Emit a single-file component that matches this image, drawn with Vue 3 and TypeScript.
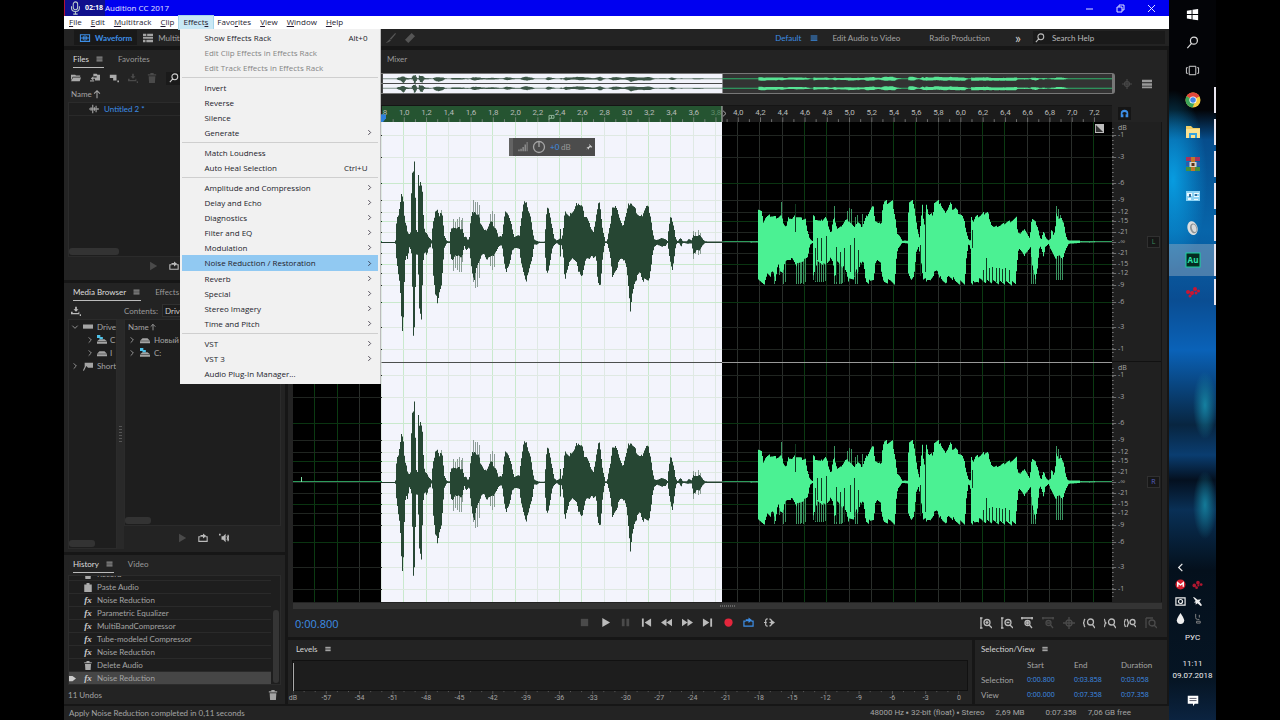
<script setup lang="ts">
import { h, ref } from 'vue'

type Sample = [number, number, number]
type Edge = [number, number]

/* ---------- icons ---------- */
interface Glyph { fill?: string; line?: string; accent?: string }
const glyphs: Record<string, Glyph> = {
  menu: { line: 'M2 3.5H10M2 6H10M2 8.5H10' },
  folder: { fill: 'M0 2H5L6 3H11V4.5H2L0 9ZM2.5 5.5H12L10.5 10H0Z' },
  importFile: { fill: 'M4 1H8L9 2H12V9H6V7H4V9L1 6.5L4 4V5.5H8V4H4Z', line: 'M0 9.5H5' },
  newFile: { fill: 'M1 2H9V9H5V6H1ZM10 9H12V11H10Z' },
  insert: { fill: 'M5 1H7V4H9L6 7L3 4H5ZM0 7H2V8.5H9V7H10V10H0ZM10.5 10H12V12H10.5Z' },
  trash: { fill: 'M4 0H8V1.5H11V3H1V1.5H4ZM2 4H10L9.5 12H2.5Z' },
  search: { line: 'M10.5 4.5A3.5 3.5 0 1 1 3.5 4.5A3.5 3.5 0 0 1 10.5 4.5ZM4.5 7L1 11' },
  play: { fill: 'M2.5 1L11 6L2.5 11Z' },
  stop: { fill: 'M2 2H10V10H2Z' },
  pause: { fill: 'M2 2H5V10H2ZM7 2H10V10H7Z' },
  first: { fill: 'M1 1.5H3V10.5H1ZM11 1.5V10.5L4 6Z' },
  last: { fill: 'M9 1.5H11V10.5H9ZM1 1.5V10.5L8 6Z' },
  rewind: { fill: 'M6 2V10L0 6ZM12 2V10L6 6Z' },
  forward: { fill: 'M0 2V10L6 6ZM6 2V10L12 6Z' },
  record: { fill: 'M10.5 6A4.5 4.5 0 1 1 1.5 6A4.5 4.5 0 0 1 10.5 6Z' },
  loop: { line: 'M3 4.5H1V10H11V4.5H9', fill: 'M6 0.5L10 3.5L6 6.5V4.5H3V2.5H6Z' },
  skip: { line: 'M4 2Q1 2 2 6Q1 10 4 10M6 2Q9 3 8 6Q9 9 6 10M0 6H3M6 6H10', fill: 'M8 3L12 6L8 9Z' },
  speaker: { fill: 'M3 4H5L8 1V11L5 8H3ZM0 1H2V3H0Z', line: 'M9.5 3.5Q11 6 9.5 8.5M10.5 2Q13 6 10.5 10' },
  wave: { line: 'M0 6H12M2.5 4V8M4.5 1V11M6.5 4V8M8.5 2V10M10.5 5V7' },
  waveBox: { line: 'M.5 2H11.5V10H.5ZM1 6H11M4 4V8M6 3V9M8 4V8' },
  multi: { fill: 'M0 1H4V3.5H0ZM5 1H12V3.5H5ZM0 4.5H12V7H0ZM0 8H3V11H0ZM4 8H12V11H4Z' },
  brush: { fill: 'M11 0L12 1L6 8L4.5 7ZM4 7.5L6 9Q3 12 0 11.5Q3 10 4 7.5Z' },
  heal: { fill: 'M8 0L12 4L4 12L0 8Z' },
  up: { line: 'M6 11V2M2.5 5.5L6 2L9.5 5.5' },
  right: { line: 'M4 2L8 6L4 10' },
  down: { line: 'M2 4L6 8L10 4' },
  drive: { fill: 'M3 4H9L12 7H0ZM0 7.5H12V10H0Z' },
  systemDrive: { fill: 'M3 5H9L12 7.5H0ZM0 8H12V10.5H0Z', accent: 'M0 0H4V2.5H7V5H3V3.5H0Z' },
  disk: { fill: 'M0 3H12V8H0Z' },
  shortcut: { fill: 'M2 2H12V8H6L4 6L1 12L0 11L2 7Z' },
  paste: { fill: 'M1 2H4V0H8V2H11V12H1Z' },
  pin: { fill: 'M6 1L11 6L9 7L8 6L6 8V10L4 8L1 11L4 7L2 6H5L7 4Z' },
  headphones: { fill: 'M1 11V6A5 5 0 0 1 11 6V11H7.5V7H9A3 3 0 0 0 3 7H4.5V11Z' },
  target: { line: 'M6 0V12M0 6H12M9 6A3 3 0 1 1 3 6A3 3 0 0 1 9 6Z' },
  list: { fill: 'M0 1H12V4H0ZM0 5H12V8H0ZM0 9H12V11H0Z' },
  zoomInV: { line: 'M1 1V11M0 1H2.5M0 11H2.5M10 5.5A3 3 0 1 1 4 5.5A3 3 0 0 1 10 5.5ZM9 8L12 11M5.5 5.5H8.5M7 4V7' },
  zoomOutV: { line: 'M1 1V11M0 1H2.5M0 11H2.5M10 5.5A3 3 0 1 1 4 5.5A3 3 0 0 1 10 5.5ZM9 8L12 11M5.5 5.5H8.5' },
  zoomInH: { line: 'M0 1H12M1 0V2.5M11 0V2.5M9 6A2.5 2.5 0 1 1 4 6A2.5 2.5 0 0 1 9 6ZM8.5 8L11 11M5 6H8M6.5 4.5V7.5' },
  zoomOutH: { line: 'M0 1H12M1 0V2.5M11 0V2.5M9 6A2.5 2.5 0 1 1 4 6A2.5 2.5 0 0 1 9 6ZM8.5 8L11 11M5 6H8' },
  zoomStart: { line: 'M2 2Q1 3 1 5L0 6L1 7Q1 9 2 10M10.5 5A3 3 0 1 1 4.5 5A3 3 0 0 1 10.5 5ZM9.5 7.5L12 11' },
  zoomEnd: { line: 'M0 2Q1 3 1 5L2 6L1 7Q1 9 0 10M10.5 5A3 3 0 1 1 4.5 5A3 3 0 0 1 10.5 5ZM9.5 7.5L12 11' },
  zoomSel: { line: 'M1.5 2L0 6L1.5 10M3 2L4.5 6L3 10M11 5A2.5 2.5 0 1 1 6 5A2.5 2.5 0 0 1 11 5ZM10 7.5L12 10' },
  zoomFull: { line: 'M1 1V11M1 1H8M10 6A3 3 0 1 1 4 6A3 3 0 0 1 10 6ZM9 8L12 11' },
}
const Icon = (props: { name: string }) => {
  const g = glyphs[props.name]
  return h('svg', { class: 'icon', viewBox: '0 0 12 12', 'aria-hidden': 'true' }, [
    g.fill ? h('path', { d: g.fill, fill: 'currentColor' }) : null,
    g.accent ? h('path', { d: g.accent, fill: '#4fc3ea' }) : null,
    g.line ? h('path', { d: g.line, fill: 'none', stroke: 'currentColor', 'stroke-width': '1.3' }) : null,
  ])
}
Icon.props = ['name']

/* ---------- menus ---------- */
const menusLeft = [['', 'F', 'ile'], ['', 'E', 'dit'], ['', 'M', 'ultitrack'], ['', 'C', 'lip']]
const menusRight = [['Favo', 'r', 'ites'], ['', 'V', 'iew'], ['', 'W', 'indow'], ['', 'H', 'elp']]
interface Entry { text: string; key?: string; off?: boolean; sub?: boolean; hot?: boolean }
const sub = (text: string): Entry => ({ text, sub: true })
const groups: Entry[][] = [
  [
    { text: 'Show Effects Rack', key: 'Alt+0' },
    { text: 'Edit Clip Effects in Effects Rack', off: true },
    { text: 'Edit Track Effects in Effects Rack', off: true },
  ],
  [{ text: 'Invert' }, { text: 'Reverse' }, { text: 'Silence' }, sub('Generate')],
  [{ text: 'Match Loudness' }, { text: 'Auto Heal Selection', key: 'Ctrl+U' }],
  [
    sub('Amplitude and Compression'), sub('Delay and Echo'), sub('Diagnostics'), sub('Filter and EQ'),
    sub('Modulation'), { text: 'Noise Reduction / Restoration', sub: true, hot: true }, sub('Reverb'),
    sub('Special'), sub('Stereo Imagery'), sub('Time and Pitch'),
  ],
  [sub('VST'), sub('VST 3'), { text: 'Audio Plug-In Manager...' }],
]

const history = [
  { icon: 'trash', text: 'Record' },
  { icon: 'paste', text: 'Paste Audio' },
  { icon: 'fx', text: 'Noise Reduction' },
  { icon: 'fx', text: 'Parametric Equalizer' },
  { icon: 'fx', text: 'MultiBandCompressor' },
  { icon: 'fx', text: 'Tube-modeled Compressor' },
  { icon: 'fx', text: 'Noise Reduction' },
  { icon: 'trash', text: 'Delete Audio' },
  { icon: 'fx', text: 'Noise Reduction' },
]
const current = ref(8)

const transport = [
  ['stop', 'Stop', 'dim'], ['play', 'Play', ''], ['pause', 'Pause', 'dim'], ['first', 'Go to start', ''],
  ['rewind', 'Rewind', ''], ['forward', 'Fast forward', ''], ['last', 'Go to end', ''],
  ['record', 'Record', 'red'], ['loop', 'Loop playback', 'blue'], ['skip', 'Skip selection', ''],
]
const zooms = [
  ['zoomInV', 'Zoom in amplitude', ''], ['zoomOutV', 'Zoom out amplitude', ''], ['zoomInH', 'Zoom in time', ''],
  ['zoomOutH', 'Zoom out time', 'dim'], ['target', 'Zoom out full', 'dim'], ['zoomStart', 'Zoom to in point', ''],
  ['zoomEnd', 'Zoom to out point', ''], ['zoomSel', 'Zoom to selection', ''], ['zoomFull', 'Zoom all', 'dim'],
]

/* ---------- time and level scales ---------- */
const W = 819
const DURATION = 7.358
const SEL_END = 429
const SEL_START = 89
const times = Array.from({ length: 36 }, (_, i) => (i + 1) / 5)
const timeX = (t: number) => (t / DURATION) * W
const pct = (v: number, total: number) => (v / total) * 100 + '%'
const timeText = (t: number) => t.toFixed(1).replace('.', ',')
const greenLine = (i: number) => [0, 1, 4, 5, 8, 9, 11, 12, 15, 16, 22, 23, 26, 27, 30, 31, 35].includes(i)

const scale: [number, string][] = [
  [13, '-1'], [35, '-3'], [61, '-6'], [78, '-9'], [90, '-12'], [99, '-15'], [110, '-21'], [120, '-∞'],
  [131, '-21'], [142, '-15'], [151, '-12'], [163, '-9'], [180, '-6'], [205, '-3'], [227, '-1'],
]
const minorTicks = Array.from({ length: 58 }, (_, i) => i * 4 + 6)
const levels = Array.from({ length: 21 }, (_, i) => (i === 0 ? 'dB' : i === 20 ? '0' : String(-60 + i * 3)))

/* ---------- waveform envelopes: x in thirds of a unit, heights above and below the axis ---------- */
const speechA: Sample[] = [
  [46, 5, 5], [50, 75, 60], [55, 80, 100], [60, 110, 130], [66, 150, 262], [71, 120, 235], [74, 60, 70], [78, 55, 40],
  [82, 30, 50], [88, 25, 15], [92, 30, 25], [95, 205, 40], [100, 205, 280], [103, 230, 250], [106, 140, 130],
  [108, 40, 40], [112, 30, 40], [115, 200, 100], [118, 165, 200], [124, 180, 225], [128, 150, 90], [131, 50, 40],
  [135, 30, 30], [140, 25, 40], [146, 15, 15], [150, 10, 20], [154, 5, 5], [157, 40, 20], [160, 60, 100], [166, 95, 150],
  [172, 97, 190], [178, 75, 150], [184, 90, 125], [188, 80, 90], [192, 20, 20], [200, 3, 3], [208, 2, 2], [212, 40, 50],
  [218, 40, 55], [224, 45, 40], [230, 40, 45], [236, 45, 40], [242, 40, 45], [248, 40, 40], [252, 15, 10], [258, 15, 25],
  [264, 5, 18], [268, 15, 20], [272, 70, 60], [278, 90, 100], [284, 95, 110], [290, 80, 75], [296, 80, 60],
  [300, 60, 50], [306, 50, 40], [312, 35, 35], [318, 35, 50], [324, 45, 50], [330, 60, 45], [336, 60, 40], [342, 45, 40],
  [348, 40, 30], [355, 15, 15], [360, 20, 10], [366, 15, 12], [372, 70, 60], [378, 95, 88], [384, 85, 80], [390, 65, 60],
  [396, 45, 25], [402, 15, 20], [410, 18, 18], [418, 20, 20], [422, 60, 60], [430, 110, 90], [438, 130, 115],
  [444, 95, 100], [450, 80, 70], [456, 45, 50], [462, 8, 8], [470, 3, 8], [480, 1, 1], [494, 1, 1], [498, 80, 90],
  [503, 110, 98], [510, 75, 60], [516, 50, 20], [522, 12, 10], [530, 4, 3], [538, 10, 10], [541, 40, 45], [544, 10, 10],
  [549, 25, 30], [554, 100, 110], [560, 85, 95], [568, 75, 60], [574, 90, 50], [582, 95, 55], [590, 115, 60],
  [595, 120, 85], [600, 110, 100], [606, 108, 105], [612, 80, 70], [620, 75, 50], [628, 55, 50], [634, 40, 40],
  [640, 30, 50], [648, 70, 40], [654, 120, 130], [658, 120, 135], [662, 90, 130], [666, 45, 60], [672, 20, 15],
  [676, 2, 2], [681, 2, 2], [684, 20, 15], [690, 50, 35], [697, 105, 110], [704, 100, 90], [710, 110, 80], [716, 80, 60],
  [722, 60, 50], [728, 45, 50], [734, 70, 60], [740, 90, 80], [746, 115, 140], [752, 122, 210], [757, 110, 160],
  [764, 100, 120], [772, 85, 105], [780, 75, 90], [786, 80, 110], [792, 95, 115], [800, 108, 115], [806, 100, 112],
  [812, 75, 90], [817, 35, 40], [822, 8, 15], [830, 6, 8], [846, 12, 14], [856, 8, 12], [862, 3, 3], [866, 45, 25],
  [872, 82, 70], [877, 60, 85], [882, 40, 50], [887, 10, 10], [893, 2, 2], [899, 10, 5], [903, 12, 15], [908, 2, 2],
  [920, 2, 5], [926, 10, 5], [934, 5, 5], [940, 20, 35], [950, 18, 25], [958, 20, 25], [964, 15, 15], [970, 6, 8],
  [975, 2, 2], [1035, 1, 1],
]
const upB: Edge[] = [
  [90, 1], [113, 1], [114, 100], [124, 90], [128, 60], [136, 75], [150, 80], [165, 75], [175, 75], [182, 80], [190, 55],
  [197, 45], [205, 75], [215, 70], [225, 80], [235, 75], [245, 70], [255, 70], [260, 35], [268, 10], [276, 3], [278, 80],
  [285, 70], [300, 62], [315, 75], [320, 65], [325, 45], [332, 25], [338, 65], [343, 70], [350, 40], [360, 45],
  [375, 65], [385, 65], [400, 45], [412, 60], [425, 45], [435, 70], [445, 90], [455, 105], [460, 100], [464, 65],
  [475, 55], [483, 60], [487, 110], [492, 120], [516, 120], [520, 100], [525, 70], [530, 25], [540, 15], [545, 4],
  [561, 4], [565, 120], [580, 120], [585, 80], [592, 30], [597, 15], [600, 50], [606, 112], [611, 40], [618, 118],
  [625, 80], [638, 85], [642, 120], [660, 120], [664, 105], [672, 90], [682, 100], [690, 115], [697, 100], [705, 102],
  [713, 90], [725, 80], [732, 60], [738, 30], [745, 5], [750, 5], [753, 80], [758, 60], [765, 75], [780, 80], [795, 90],
  [803, 90], [808, 60], [820, 45], [840, 50], [860, 60], [875, 65], [888, 72], [892, 30], [900, 25], [912, 40],
  [920, 25], [928, 10], [934, 72], [945, 60], [952, 45], [957, 20], [962, 5], [970, 35], [976, 12], [984, 5], [990, 10],
  [994, 45], [998, 20], [1004, 30], [1008, 90], [1014, 70], [1022, 70], [1030, 60], [1036, 20], [1042, 5], [1078, 4],
  [1080, 1], [1124, 1],
]
const downB: Edge[] = [
  [90, 1], [113, 1], [114, 120], [130, 122], [136, 120], [140, 95], [150, 100], [158, 90], [165, 115], [172, 65],
  [180, 90], [186, 90], [195, 60], [200, 55], [215, 50], [222, 60], [228, 70], [256, 50], [262, 45], [268, 10],
  [276, 3], [279, 100], [290, 60], [318, 70], [322, 60], [330, 50], [338, 60], [343, 110], [350, 60], [368, 75],
  [378, 90], [385, 118], [400, 110], [406, 80], [412, 100], [420, 60], [430, 65], [436, 118], [450, 120], [460, 110],
  [464, 70], [470, 55], [480, 60], [486, 110], [490, 122], [510, 118], [524, 122], [527, 60], [532, 20], [540, 10],
  [545, 3], [561, 4], [564, 100], [572, 115], [582, 95], [588, 30], [594, 15], [600, 40], [608, 115], [616, 105],
  [620, 122], [630, 115], [640, 95], [650, 85], [656, 100], [664, 118], [676, 120], [684, 105], [695, 108], [705, 120],
  [720, 122], [733, 125], [737, 60], [742, 20], [745, 3], [750, 20], [753, 120], [762, 125], [770, 118], [780, 115],
  [800, 118], [885, 125], [890, 60], [895, 20], [905, 30], [912, 40], [920, 30], [930, 15], [935, 70], [945, 110],
  [952, 70], [958, 10], [965, 25], [970, 45], [975, 15], [985, 5], [992, 25], [1000, 40], [1006, 50], [1016, 40],
  [1026, 50], [1030, 40], [1038, 18], [1045, 5], [1078, 3], [1080, 1], [1124, 1],
]

const at = (edge: Edge[], x: number): number => {
  const i = edge.findIndex((p) => p[0] >= x)
  if (i <= 0) return edge[i === 0 ? 0 : edge.length - 1][1]
  const [x0, y0] = edge[i - 1]
  const [x1, y1] = edge[i]
  return y0 + ((y1 - y0) * (x - x0)) / (x1 - x0)
}
const ripple = (i: number) => 0.94 + (((i * 7919) % 13) / 13) * 0.12

function envelope(up: Edge[], down: Edge[], offset: number, axis: number, gain: number): string {
  const from = up[0][0]
  const to = up[up.length - 1][0]
  let top = ''
  let bottom = ''
  for (let x = from, i = 0; x <= to; x += 3, i++) {
    const px = Math.round(offset + x / 3)
    const a = (axis - (at(up, x) / 3) * gain * ripple(i)).toFixed(1)
    const b = (axis + (at(down, x) / 3) * gain * ripple(i + 5)).toFixed(1)
    top += `L${px} ${a}H${px + 1}`
    bottom = `L${px + 1} ${b}H${px}` + bottom
  }
  return 'M' + top.slice(1) + bottom + 'Z'
}
const upA: Edge[] = speechA.map((s) => [s[0], s[1]])
const downA: Edge[] = speechA.map((s) => [s[0], s[2]])
const channels = [120, 360].map((axis) => ({
  axis,
  a: envelope(upA, downA, 87, axis, 1),
  b: envelope(upB, downB, 427, axis, 1),
}))
const mini = [5, 15].map((axis) => ({
  axis,
  a: envelope(upA, downA, 87, axis, 0.05),
  b: envelope(upB, downB, 427, axis, 0.05),
}))

/* thin transients and gaps: x, start, end relative to the axis */
const bars = (list: [number, number, number][], offset: number) =>
  list.map(([x, y0, y1]) => `M${Math.round(offset + x / 3) + 0.5} ${y0}V${y1}`).join('')
const thinA = bars([
  [170, -32, 40], [182, -32, 30], [218, -23, 29], [224, -20, 26], [230, -23, 28], [236, -25, 30], [242, -22, 30],
  [247, -24, 20], [279, -42, 40], [284, -40, 46], [290, -40, 45], [297, -37, 36], [331, -28, 24], [336, -31, 28],
  [342, -28, 25], [940, -11, 17], [946, -10, 12], [953, -12, 13], [960, -9, 12],
], 87)
const thinB = bars([
  [182, -40, 0], [225, -38, 0], [163, 0, 42], [176, 0, 33], [189, 0, 42], [194, 0, 40], [228, 0, 42], [234, 0, 42],
  [239, 0, 42], [244, 0, 41], [250, 0, 42], [255, 0, 40], [278, 0, 38], [286, 0, 40], [292, 0, 40], [298, 0, 40],
  [304, 0, 40], [310, 0, 40], [316, 0, 39], [343, -36, 42], [349, 0, 42], [356, 0, 42], [362, 0, 42], [367, 0, 41],
  [380, -31, 0], [386, -34, 0], [392, -33, 0], [404, -25, 42], [410, -27, 42], [426, -28, 0], [933, 0, 42],
  [939, 0, 42], [944, 0, 42], [1007, -36, 38], [1013, -33, 38], [1019, -27, 38], [1025, -22, 38],
], 427)
const gapsB = bars([
  [226, -38, -10], [284, 6, 39], [291, -4, 18], [303, -4, 19], [317, -6, 38], [349, 5, 40], [361, 10, 42], [373, 6, 40],
  [389, 3, 30], [403, -4, 34], [415, 8, 30], [600, 3, 34], [614, -30, 30], [789, 28, 40], [797, 16, 40], [807, 26, 40],
  [817, 25, 40], [828, 26, 40], [838, 26, 40], [847, 27, 40], [856, 26, 40], [868, 28, 40], [755, -12, 6],
], 427)

const clips = [
  { text: 'Chrome', cls: 'chrome' }, { text: 'Explorer', cls: 'explorer' }, { text: 'Archive', cls: 'rar' },
  { text: 'Control panel', cls: 'panelapp' }, { text: 'Audio device', cls: 'device' },
  { text: 'Audition', cls: 'au' }, { text: 'Molecule', cls: 'red' },
]
</script>

<template>
  <div class="screen">
    <main class="window">
      <header class="titlebar">
        <div class="recorder">
          <svg viewBox="0 0 12 16" class="mic" aria-hidden="true"><rect x="4" y="1" width="5" height="9" rx="2.5" /><path d="M2 6V8Q2 12 6.5 12Q11 12 11 8V6M6.5 12V15M4 15H9" /></svg>
          <span>02:18</span>
        </div>
        <span class="app-title">Audition CC 2017</span>
        <div class="window-buttons">
          <button aria-label="Minimize"><svg viewBox="0 0 9 9"><path d="M1 5H8" /></svg></button>
          <button aria-label="Restore"><svg viewBox="0 0 9 9"><path d="M1 3H6V8H1ZM3 3V1H8V6H6" /></svg></button>
          <button aria-label="Close"><svg viewBox="0 0 9 9"><path d="M1 1L8 8M8 1L1 8" /></svg></button>
        </div>
      </header>

      <nav class="menubar">
        <button v-for="m in menusLeft" :key="m[2]">{{ m[0] }}<u>{{ m[1] }}</u>{{ m[2] }}</button>
        <div class="menu-holder">
          <button class="open">Effect<u>s</u></button>
          <div class="menu">
            <ul v-for="(group, g) in groups" :key="g">
              <li v-for="item in group" :key="item.text">
                <button :class="{ hot: item.hot }" :disabled="item.off">
                  <span>{{ item.text }}</span>
                  <span v-if="item.key" class="key">{{ item.key }}</span>
                  <Icon v-if="item.sub" name="right" />
                </button>
              </li>
            </ul>
          </div>
        </div>
        <button v-for="m in menusRight" :key="m[2]">{{ m[0] }}<u>{{ m[1] }}</u>{{ m[2] }}</button>
      </nav>

      <div class="toolbar">
        <div class="modes">
          <button class="mode on"><Icon name="waveBox" />Waveform</button>
          <button class="mode"><Icon name="multi" />Multitrack</button>
        </div>
        <div class="brushes"><Icon name="brush" /><Icon name="heal" /></div>
        <div class="workspaces">
          <button class="blue default">Default <Icon name="menu" /></button>
          <button>Edit Audio to Video</button>
          <button>Radio Production</button>
          <button class="more" aria-label="More workspaces">»</button>
        </div>
        <label class="help"><Icon name="search" /><input type="search" placeholder="Search Help" aria-label="Search Help" /></label>
      </div>

      <div class="workspace">
        <aside class="side">
          <section class="panel files-panel">
            <div class="tabs"><button class="tab on">Files<Icon name="menu" /></button><button class="tab">Favorites</button></div>
            <div class="file-tools">
              <button aria-label="Open"><Icon name="folder" /></button>
              <button aria-label="Import"><Icon name="importFile" /></button>
              <button aria-label="New"><Icon name="newFile" /></button>
              <button aria-label="Insert" class="dim"><Icon name="insert" /></button>
              <button aria-label="Delete file" class="dim"><Icon name="trash" /></button>
              <label class="filter"><Icon name="search" /><input aria-label="Filter files" /></label>
            </div>
            <div class="list-head">Name<Icon name="up" /></div>
            <div class="well files">
              <div class="file-row"><Icon name="wave" /><a href="#">Untitled 2 *</a></div>
              <i class="thumb long"></i>
            </div>
            <div class="mini-transport files-transport">
              <button aria-label="Play file" class="dim"><Icon name="play" /></button>
              <button aria-label="Loop file"><Icon name="loop" /></button>
            </div>
          </section>

          <section class="panel media-panel">
            <div class="tabs"><button class="tab on">Media Browser<Icon name="menu" /></button><button class="tab">Effects Rack</button></div>
            <div class="contents">
              <button aria-label="Import media"><Icon name="insert" /></button>
              <label for="contents">Contents:</label>
              <select id="contents"><option>Drives</option></select>
            </div>
            <div class="split">
              <div class="tree">
                <div><Icon name="down" /><Icon name="disk" /><span>Drive</span></div>
                <div class="child"><Icon name="right" /><Icon name="systemDrive" /><span>C</span></div>
                <div class="child"><Icon name="right" /><Icon name="drive" /><span>I</span></div>
                <div><Icon name="right" /><Icon name="shortcut" /><span>Short</span></div>
                <i class="thumb"></i>
              </div>
              <div class="splitter"><i></i></div>
              <div class="right-list">
                <div class="tree flat">
                  <div class="head">Name<Icon name="up" /></div>
                  <div><Icon name="right" /><Icon name="drive" /><span>Новый</span></div>
                  <div><Icon name="right" /><Icon name="systemDrive" /><span>C:</span></div>
                  <i class="thumb"></i>
                </div>
                <div class="mini-transport">
                  <button aria-label="Play media" class="dim"><Icon name="play" /></button>
                  <button aria-label="Loop media"><Icon name="loop" /></button>
                  <button aria-label="Auto-play"><Icon name="speaker" /></button>
                </div>
              </div>
            </div>
          </section>

          <section class="panel">
            <div class="tabs"><button class="tab on">History<Icon name="menu" /></button><button class="tab">Video</button></div>
            <div class="well history">
              <ol>
                <li v-for="(row, i) in history" :key="i" :class="{ current: i === current }">
                  <button @click="current = i">
                    <span class="marker"><svg v-if="i === current" viewBox="0 0 8 8"><path d="M0 1H4L8 4L4 7H0Z" /></svg></span>
                    <em v-if="row.icon === 'fx'">fx</em>
                    <Icon v-else :name="row.icon" />
                    <span>{{ row.text }}</span>
                  </button>
                </li>
              </ol>
              <i class="vthumb"></i>
            </div>
            <div class="undos"><span>11 Undos</span><button aria-label="Clear history"><Icon name="trash" /></button></div>
          </section>
        </aside>

        <div class="main">
          <section class="editor">
            <div class="tabs mixer-tabs"><button class="tab">Mixer</button></div>

            <div class="overview">
              <svg class="mini" viewBox="0 0 819 20" preserveAspectRatio="none" role="img" aria-label="Overview">
                <rect width="819" height="20" fill="#333" />
                <rect :x="SEL_START" :width="SEL_END - SEL_START" height="20" fill="#f2f3fb" />
                <path d="M0 10H89" stroke="#777" /><path d="M89 10H429" stroke="#444" />
                <g v-for="m in mini" :key="m.axis">
                  <path :d="'M89 ' + m.axis + 'H429'" stroke="#2b4c38" stroke-width=".6" />
                  <path :d="'M429 ' + m.axis + 'H819'" stroke="#2fb56c" />
                  <path :d="m.a" fill="#3c5647" /><path :d="m.b" fill="#57e594" />
                </g>
              </svg>
              <div class="overview-tools">
                <Icon name="target" class="dim" />
                <Icon name="list" />
              </div>
            </div>

            <div class="stage">
              <div class="ruler">
                <span class="selected" :style="{ left: pct(SEL_START, W), right: pct(W - SEL_END, W) }"></span>
                <span v-for="t in times" :key="t" class="time" :class="{ faded: t === 3.8 }" :style="{ left: pct(timeX(t), W) }">{{ timeText(t) }}</span>
                <svg viewBox="0 0 819 17" preserveAspectRatio="none" aria-hidden="true">
                  <path v-for="t in times" :key="t" :d="`M${timeX(t)} 12V17M${timeX(t - 0.1)} 14V17`" stroke="#999" stroke-width=".7" />
                  <path d="M429 0V17" stroke="#c8c8c8" /><path d="M430 5L433 8L430 11" fill="none" stroke="#aaa" />
                  <path d="M87 9H93V13L90 17H87Z" fill="#2f80dc" />
                  <path d="M256 15V10H261V13H256M258.5 10V13" fill="none" stroke="#8fb59a" />
                </svg>
              </div>
              <div class="snap"><button aria-label="Toggle snapping" class="blue"><Icon name="headphones" /></button></div>

              <div class="waves">
                <svg viewBox="0 0 819 480" preserveAspectRatio="none" role="img" aria-label="Stereo waveform">
                  <rect width="819" height="480" fill="#000" />
                  <rect :x="SEL_START" :width="SEL_END - SEL_START" height="480" fill="#f3f4fc" />
                  <g v-for="(t, i) in times" :key="t">
                    <path :d="`M${Math.round(timeX(t)) - 0.5} 0V480`"
                      :stroke="timeX(t) > 89 && timeX(t) < 429 ? (greenLine(i) ? '#c9e9cd' : '#dfe9e4') : greenLine(i) ? '#0b3a12' : '#2a2e2b'" />
                  </g>
                  <g v-for="c in channels" :key="c.axis">
                    <g v-for="(s, i) in scale" :key="i">
                      <path :d="`M0 ${c.axis + 0.5 + s[0] - 120}H89M429 ${c.axis + 0.5 + s[0] - 120}H819`" :stroke="[2, 5, 9, 12].includes(i) ? '#0a3411' : '#202521'" />
                      <path :d="`M89 ${c.axis + 0.5 + s[0] - 120}H429`" :stroke="[2, 5, 9, 12].includes(i) ? '#c9e9cd' : '#dfe9e2'" />
                    </g>
                    <path :d="`M0 ${c.axis - 0.5}H89M429 ${c.axis - 0.5}H819`" stroke="#2d9b5c" />
                    <path :d="`M89 ${c.axis + 0.5}H429`" stroke="#24402f" />
                    <path :d="`M8.5 ${c.axis - 5}V${c.axis}`" stroke="#7fe0a5" />
                    <g :transform="`translate(0 ${c.axis})`">
                      <path :d="thinA" stroke="#8b9d95" />
                      <path :d="thinB" stroke="#3a9360" />
                    </g>
                    <path :d="c.a" fill="#264633" />
                    <path :d="c.b" fill="#4bf193" />
                    <path :d="gapsB" :transform="`translate(0 ${c.axis})`" stroke="#0f3a20" />
                  </g>
                  <path d="M0 240.5H89M429 240.5H819" stroke="#999" /><path d="M89 240.5H429" stroke="#4c4f4e" />
                </svg>
                <div class="hud" :style="{ left: pct(216, W) }">
                  <i class="grip"></i>
                  <svg viewBox="0 0 12 12" class="icon" aria-hidden="true"><path d="M1 11V9H2.5V11ZM3.5 11V8H5V11ZM6 11V6H7.5V11ZM8.5 11V3H10V11ZM11 11V0H12V11Z" fill="#999" /></svg>
                  <svg viewBox="0 0 14 14" class="knob" aria-hidden="true"><circle cx="7" cy="7" r="5.5" /><path d="M7 2V7" /></svg>
                  <label><input aria-label="Gain" value="+0" />dB</label>
                  <button aria-label="Pin"><Icon name="pin" /></button>
                </div>
                <button class="corner" aria-label="Show spectral display"><svg viewBox="0 0 10 10"><path d="M0 0H10V10H0Z" fill="#bbb" /><path d="M1 1L9 9H1Z" fill="#333" /></svg></button>
              </div>

              <div class="db-scale">
                <div v-for="ch in ['L', 'R']" :key="ch" class="db-channel">
                  <span class="db-name">dB</span>
                  <span v-for="(s, i) in scale" :key="i" class="db" :style="{ top: pct(s[0], 240) }">{{ s[1] }}</span>
                  <svg viewBox="0 0 6 240" preserveAspectRatio="none" aria-hidden="true"><path v-for="y in minorTicks" :key="y" :d="`M0 ${y + 0.5}H2`" /><path v-for="(s, i) in scale" :key="'s' + i" :d="`M0 ${s[0] + 0.5}H5`" /></svg>
                  <button :class="['channel', ch]">{{ ch }}</button>
                </div>
              </div>
            </div>
            <div class="hscroll"><i></i></div>

            <div class="transport">
              <output class="clock">0:00.800</output>
              <div class="buttons"><button v-for="b in transport" :key="b[0]" :class="b[2]" :aria-label="b[1]"><Icon :name="b[0]" /></button></div>
              <div class="zooms"><button v-for="b in zooms" :key="b[0]" :class="b[2]" :aria-label="b[1]"><Icon :name="b[0]" /></button></div>
            </div>
          </section>

          <div class="lower">
            <section class="levels">
              <h2>Levels<Icon name="menu" /></h2>
              <div class="meter"><i></i></div>
              <div class="level-scale">
                <svg viewBox="0 0 200 4" preserveAspectRatio="none" aria-hidden="true"><path v-for="n in 61" :key="n" :d="`M${((n - 1) * 200) / 60} 0V${(n - 1) % 3 ? 1.5 : 4}`" /></svg>
                <div class="level-texts"><span v-for="l in levels" :key="l">{{ l }}</span></div>
              </div>
            </section>
            <section class="selection">
              <h2>Selection/View<Icon name="menu" /></h2>
              <table>
                <thead><tr><td></td><th>Start</th><th>End</th><th>Duration</th></tr></thead>
                <tbody>
                  <tr><th>Selection</th><td>0:00.800</td><td>0:03.858</td><td>0:03.058</td></tr>
                  <tr><th>View</th><td>0:00.000</td><td>0:07.358</td><td>0:07.358</td></tr>
                </tbody>
              </table>
            </section>
          </div>
        </div>
      </div>

      <footer class="status">
        <span class="message">Apply Noise Reduction completed in 0,11 seconds</span>
        <span>48000 Hz ▪ 32-bit (float) ▪ Stereo</span><span>2,69 MB</span><span class="len">0:07.358</span><span>7,06 GB free</span>
      </footer>
    </main>

    <aside class="taskbar">
      <button aria-label="Start" class="sys"><svg viewBox="0 0 16 16" fill="#fff"><path d="M2 4L7 3.2V7.5H2ZM8 3L14 2V7.5H8ZM2 8.5H7V13L2 12.2ZM8 8.5H14V14L8 13.2Z" /></svg></button>
      <button aria-label="Search" class="sys"><svg viewBox="0 0 16 16" fill="none" stroke="#ddd" stroke-width="1.3"><circle cx="9.5" cy="6" r="3.7" /><path d="M7 9L2.5 14" /></svg></button>
      <button aria-label="Task view" class="sys"><svg viewBox="0 0 16 16" fill="none" stroke="#ddd"><path d="M4.5 3.5H11.5V12.5H4.5ZM3 5H1.5V11H3M13 5H14.5V11H13" /></svg></button>
      <button v-for="c in clips" :key="c.cls" :aria-label="c.text" :class="['app', { active: c.cls === 'au' }]">
        <svg v-if="c.cls === 'chrome'" viewBox="0 0 16 16"><circle cx="8" cy="8" r="7.5" fill="#f7cd3f" /><path d="M8 8L1.5 4.3A7.5 7.5 0 0 1 14.5 4.3Z" fill="#e2473a" /><path d="M8 8L1.5 4.3A7.5 7.5 0 0 0 7.5 15.5L10 10Z" fill="#3da65a" /><circle cx="8" cy="8" r="3.6" fill="#fff" /><circle cx="8" cy="8" r="2.8" fill="#4385e8" /></svg>
        <svg v-else-if="c.cls === 'explorer'" viewBox="0 0 16 16"><path d="M1 2H6L8 4H15V13H1Z" fill="#f1cf66" /><path d="M1 5H15V14H1Z" fill="#fbe291" /><path d="M4 9H12V14H10V11H6V14H4Z" fill="#35a3df" /></svg>
        <svg v-else-if="c.cls === 'rar'" viewBox="0 0 16 16"><path d="M1 1H15V5H1Z" fill="#a8325c" /><path d="M1 6H15V10H1Z" fill="#2c5cac" /><path d="M1 11H15V15H1Z" fill="#478f3c" /><path d="M6 1H10V15H6Z" fill="#c0772c" /><path d="M4.5 6H11.5V11H4.5Z" fill="#d8d3c8" /><path d="M6.5 7H9.5V10H6.5Z" fill="#5b3015" /></svg>
        <svg v-else-if="c.cls === 'panelapp'" viewBox="0 0 16 16"><path d="M1 3H15V13H1Z" fill="#8dd3f4" /><path d="M2 5H7V8H2ZM9 5H14V6H9ZM9 8H14V9H9ZM3 10H6V12H3ZM9 11H13V12H9Z" fill="#eef9ff" /><path d="M4 6H6V9H4ZM10 6H12V8H10Z" fill="#356e9c" /></svg>
        <svg v-else-if="c.cls === 'device'" viewBox="0 0 16 16"><g transform="rotate(-15 8 8)"><ellipse cx="7.5" cy="8" rx="5" ry="7" fill="#dcdedf" /><ellipse cx="8.5" cy="8.5" rx="3.5" ry="5" fill="#8d9396" /><ellipse cx="9" cy="8.5" rx="2.2" ry="3.8" fill="#d8dadb" /></g></svg>
        <svg v-else-if="c.cls === 'au'" viewBox="0 0 16 16"><rect x="1" y="1" width="14" height="14" fill="#052b20" stroke="#19d39a" /><text x="8" y="11" text-anchor="middle" fill="#2ee6ac">Au</text></svg>
        <svg v-else viewBox="0 0 16 16"><path d="M3 8L7 9L10 5L13 7M7 9L6 12" stroke="#a9152e" fill="none" /><g fill="#c91632"><circle cx="3" cy="8" r="2" /><circle cx="7" cy="9" r="2" /><circle cx="10" cy="5" r="2" /><circle cx="13.5" cy="7" r="1.5" /><circle cx="11" cy="9" r="1.5" /><circle cx="5" cy="12" r="1.5" /></g></svg>
      </button>
      <div class="tray">
        <button aria-label="Hidden icons"><Icon name="right" class="back" /></button><span></span>
        <svg viewBox="0 0 12 12"><circle cx="6" cy="6" r="5.5" fill="#d9202f" /><path d="M3 8.5V4L6 6.5L9 4V8.5" stroke="#fff" stroke-width="1.5" fill="none" /></svg>
        <svg viewBox="0 0 12 12" fill="#b01730"><circle cx="2.5" cy="7" r="2" /><circle cx="5" cy="9.5" r="1.5" /><circle cx="6.5" cy="4" r="2" /><circle cx="10" cy="6" r="1.5" /><circle cx="7" cy="7" r="1.2" /></svg>
        <svg viewBox="0 0 12 12" fill="none" stroke="#eee" stroke-width="1.3"><path d="M1 2H11V10H1Z" /><circle cx="6" cy="6" r="2.2" /></svg>
        <svg viewBox="0 0 12 12" fill="#eee"><path d="M1 1L3 1.5L6 4L10 3.5L8 6L11 10L9.5 11L6 8L4 9.5L4 7L2 7L4 5.5Z" /></svg>
        <svg viewBox="0 0 12 12" fill="#eee"><path d="M6 0Q10 6 10 8A4 4 0 0 1 2 8Q2 6 6 0Z" /></svg>
        <svg viewBox="0 0 12 12" stroke="#888" fill="none"><path d="M4 1V5Q4 7 6 7H8M5 9H9V11H5ZM8 2V5" /></svg>
      </div>
      <div class="lang">РУС</div>
      <time>11:11<br />09.07.2018</time>
      <button aria-label="Notifications" class="note"><svg viewBox="0 0 16 16"><path d="M2 2H14V11H10L8 14V11H2Z" fill="#fff" /><path d="M4 5H12M4 7.5H12" stroke="#445" /></svg></button>
    </aside>
  </div>
</template>

<style>
body { background: #000; }
</style>

<style scoped>
* { box-sizing: border-box; }
.screen { display: flex; min-height: 100vh; padding: 0 64px; background: #000; color: #a4a4a4; font: 8px/12px Lato, "Open Sans", sans-serif; overflow: hidden; }
button, input, select { font: inherit; color: inherit; background: none; border: 0; padding: 0; margin: 0; outline: 0; }
button { display: flex; align-items: center; white-space: nowrap; }
ul, ol { list-style: none; margin: 0; padding: 0; }
svg { display: block; }
.icon { width: 10px; height: 10px; flex: none; }
.dim { color: #4a4a4a; }
.blue { color: #3d8ee6; }
.red { color: #e3263c; }
.window { flex: 1; min-width: 0; display: flex; flex-direction: column; background: #161616; }

.titlebar { display: flex; align-items: center; height: 16px; background: #0000f0; color: #e4e6ff; font-family: "Open Sans", sans-serif; }
.recorder { display: flex; align-items: center; gap: 4px; width: 41px; height: 16px; padding-left: 4px; background: #10108c; border-left: 1px solid #b3123c; font-weight: 700; font-size: 7px; color: #fff; }
.mic { width: 12px; height: 14px; flex: none; fill: none; stroke: #bcc; stroke-width: 1.2; }
.app-title { flex: 1; }
.window-buttons { display: flex; gap: 22px; padding-right: 13px; }
.window-buttons svg { width: 9px; height: 9px; fill: none; stroke: #dfe3ff; }

.menubar { display: flex; height: 13px; padding-left: 1px; background: #fff; color: #261b30; font-family: "Open Sans", sans-serif; }
.menubar > button, .open { height: 13px; padding: 0 5px 1px 4px; }
.menubar u { text-underline-offset: 1px; }
.menu-holder { position: relative; }
.open { background: #c8e8f5; outline: 1px solid #a5d4ea; }
.menu { position: absolute; z-index: 5; top: 13px; left: 1px; width: 201px; padding: 1px 2px 3px; background: #f1f1f1; border-right: 1px solid #bbb; }
.menu ul + ul { margin-top: 2px; border-top: 1px solid #cfcfcf; padding-top: 2px; }
.menu button { width: 100%; height: 15px; padding: 0 5px 0 22px; color: #231c2b; justify-content: space-between; }
.menu button:disabled { color: #858585; }
.menu button.hot { height: 16px; background: #91c9f2; }
.menu .key { padding-right: 6px; }
.menu .icon { width: 7px; height: 7px; }

.toolbar { display: flex; align-items: center; height: 17px; margin-bottom: 2px; background: #232323; }
.modes { display: flex; width: 322px; flex: none; padding-left: 10px; }
.mode { gap: 4px; height: 15px; padding: 0 5px; }
.mode.on { color: #3d8ee6; background: #191919; font-weight: 700; }
.mode .icon { width: 12px; }
.brushes { display: flex; gap: 9px; flex: 1; color: #555; }
.workspaces { display: flex; align-items: center; gap: 29px; }
.default { gap: 8px; margin-right: -16px; }
.more { margin-left: -4px; font-size: 14px; color: #ccc; }
.help { display: flex; align-items: center; gap: 7px; width: 132px; height: 13px; margin: 0 4px 0 12px; padding-left: 2px; background: #1a1a1a; color: #bbb; }
.help input { width: 100px; }
.help input::placeholder { color: #bbb; opacity: 1; }

.workspace { flex: 1; display: flex; gap: 3px; min-height: 0; padding-top: 2px; }
.side { width: 221px; flex: none; display: grid; grid-template-rows: 230fr 269fr 149fr; gap: 3px; min-height: 0; }
.panel { display: flex; flex-direction: column; min-height: 0; background: #232323; padding: 0 4px; overflow: hidden; }
.files-panel { padding-bottom: 5px; }
.media-panel { padding-bottom: 3px; }
.tabs { display: flex; gap: 14px; height: 20px; flex: none; padding: 0 0 0 5px; }
.tab { height: 18px; gap: 6px; color: #999; }
.tab.on { color: #ddd; border-bottom: 1px solid #bbb; }
.tab .icon { width: 9px; color: #aaa; }
.file-tools { display: flex; align-items: center; gap: 9px; height: 16px; padding-left: 3px; color: #aaa; }
.filter { display: flex; align-items: center; flex: 1; background: #1a1a1a; height: 13px; padding-left: 3px; color: #ccc; }
.filter input { width: 60px; }
.list-head { display: flex; align-items: center; height: 16px; padding-left: 3px; }
.well { position: relative; flex: 1; min-height: 0; background: #1e1e1e; border: 1px solid #2b2b2b; overflow: hidden; }
.file-row { display: flex; align-items: center; gap: 5px; height: 13px; padding-left: 20px; border-bottom: 1px solid #292929; }
.file-row a { color: #3d8ee6; text-decoration: none; }
.thumb { position: absolute; left: 0; bottom: 1px; width: 26px; height: 7px; border-radius: 3px; background: #333; }
.thumb.long { width: 50px; }
.mini-transport { display: flex; align-items: center; justify-content: center; gap: 11px; height: 23px; flex: none; color: #bbb; }
.files-transport { justify-content: flex-start; height: 18px; padding-left: 80px; }

.contents { display: flex; align-items: center; height: 16px; padding: 0 0 1px 3px; color: #bbb; }
.contents label { margin-left: 43px; color: #999; }
.contents select { flex: 1; margin-left: 4px; height: 13px; padding-left: 2px; border: 1px solid #303030; background: #1d1d1d; color: #ccc; appearance: none; }
.split { flex: 1; display: flex; min-height: 0; }
.split > .tree { width: 49px; }
.tree { position: relative; background: #1e1e1e; border: 1px solid #2b2b2b; overflow: hidden; }
.tree div { display: flex; align-items: center; gap: 4px; height: 13px; padding-left: 3px; white-space: nowrap; }
.tree div .icon:first-child { width: 8px; height: 8px; }
.split > .tree div { gap: 4px; padding-left: 2px; }
.split > .tree .child { padding-left: 17px; gap: 3px; }
.tree .head .icon { width: 8px; }
.tree .head { gap: 0; }
.splitter { width: 7px; display: grid; place-items: center; background: #292929; }
.splitter i { width: 3px; height: 16px; background: repeating-linear-gradient(#555 0 1px, #292929 1px 3px); }
.right-list { flex: 1; min-width: 0; display: flex; flex-direction: column; }
.flat { flex: 1; }

.history ol { position: absolute; inset: auto 9px 0 0; }
.history li { height: 13px; border-top: 1px solid #2a2a2a; }
.history button { width: 100%; height: 12px; gap: 4px; }
.history em { width: 10px; color: #ccc; font: italic 700 9px/12px "Liberation Serif", serif; }
.history .marker { width: 10px; }
.marker svg { width: 7px; height: 7px; fill: #ccc; }
.history .icon { width: 10px; height: 9px; color: #aaa; }
.history li.current { background: #464646; }
.vthumb { position: absolute; right: 1px; bottom: 1px; width: 6px; height: 73px; border-radius: 3px; background: #353535; }
.undos { display: flex; justify-content: space-between; align-items: center; height: 19px; flex: none; padding-right: 3px; }

.main { flex: 1; min-width: 0; display: flex; flex-direction: column; gap: 3px; margin-right: 2px; }
.editor { flex: 1; display: flex; flex-direction: column; min-height: 0; padding-left: 5px; background: #232323; }
.mixer-tabs { padding-left: 94px; height: 23px; }
.overview { display: flex; height: 21px; margin-bottom: 11px; }
.mini { flex: 1; min-width: 0; height: 21px; border: 1px solid #777; border-right: 3px solid #777; border-radius: 0 3px 3px 0; }
.overview-tools { display: flex; gap: 10px; align-items: center; width: 52px; padding-left: 7px; color: #999; }
.stage { flex: 1; min-height: 0; display: grid; grid-template: 17px minmax(0, 1fr) / minmax(0, 1fr) 55px; }
.ruler { position: relative; background: #1b1b1b; overflow: hidden; border-top: 1px solid #151515; }
.ruler .selected { position: absolute; top: 0; bottom: 0; background: #255431; }
.ruler .time { position: absolute; top: 1px; width: 20px; margin-left: -10px; text-align: center; font-family: Roboto, sans-serif; color: #b8bab8; }
.ruler .faded { color: #5f8a69; }
.ruler svg { position: absolute; inset: 0; width: 100%; height: 100%; }
.snap { display: flex; align-items: center; padding-left: 6px; }
.snap button { padding: 2px; background: #151515; }
.snap .icon { width: 9px; height: 9px; }
.waves { position: relative; overflow: hidden; min-height: 0; }
.waves > svg { width: 100%; height: 100%; }
.hud { position: absolute; top: 16px; display: flex; align-items: center; gap: 4px; width: 86px; height: 18px; background: #4c4c4c; color: #999; }
.grip { width: 4px; height: 18px; background: #636363; }
.hud .icon { width: 11px; height: 10px; }
.knob { width: 14px; height: 14px; fill: none; stroke: #a5a5a5; stroke-width: 1.3; }
.hud label { display: flex; flex: 1; }
.hud input { width: 11px; color: #3d8ee6; }
.hud button { padding: 0 2px; color: #ccc; }
.hud button .icon { width: 8px; height: 8px; }
.corner { position: absolute; right: 8px; top: 2px; }
.corner svg { width: 9px; height: 9px; }
.db-scale { display: grid; grid-template-rows: 1fr 1fr; margin-right: 5px; border-right: 1px solid #151515; background: #202020; }
.db-channel { position: relative; font: 7px/12px "Open Sans", sans-serif; }
.db-channel + .db-channel { box-shadow: 0 -1px #111; }
.db-channel svg { position: absolute; left: 0; top: 0; width: 5px; height: 100%; stroke: #777; stroke-width: 1; }
.db-name { position: absolute; left: 6px; top: 0; }
.db { position: absolute; left: 6px; margin-top: -6px; }
.channel { position: absolute; right: 1px; top: 50%; margin-top: -6px; width: 13px; height: 12px; justify-content: center; background: #171717; border: 1px solid #303030; color: #3c8a5c; }
.channel.R { color: #5560c0; }
.hscroll { display: grid; place-items: center; height: 6px; margin: 1px 5px 1px 0; background: #343434; }
.hscroll i { width: 16px; height: 2px; background: repeating-linear-gradient(90deg, #666 0 1px, #343434 1px 2px); }
.transport { display: flex; align-items: center; justify-content: space-between; height: 27px; padding: 0 10px 2px 0; color: #bbb; }
.clock { width: 286px; padding: 2px 0 0 2px; color: #3d8ee6; font: 11px/14px "Open Sans", sans-serif; }
.buttons { display: flex; justify-content: space-between; width: 196px; margin-right: auto; }
.buttons .icon { width: 11px; height: 11px; }
.zooms { display: flex; justify-content: space-between; width: 177px; }
.zooms .icon { width: 12px; height: 12px; }

.lower { display: flex; gap: 3px; height: 64px; }
.lower h2 { display: flex; align-items: center; gap: 6px; margin: 0; height: 17px; font: inherit; color: #d4d4d4; }
.lower h2 .icon { width: 8px; }
.levels { flex: 1; padding: 0 4px; background: #232323; }
.levels h2 { padding-left: 4px; }
.meter { height: 31px; background: #1d1d1d; border: 1px solid #111; padding-top: 2px; margin-top: 3px; }
.meter i { display: block; width: 1px; height: 28px; background: #aaa; }
.level-scale { margin: 0 9px 0 1px; }
.level-scale svg { width: 100%; height: 3px; stroke: #888; stroke-width: .25; }
.level-texts { display: flex; justify-content: space-between; margin: 0 -10px; height: 10px; font: 7px/9px Roboto, sans-serif; }
.level-texts span { width: 20px; text-align: center; }
.selection { width: 192px; flex: none; padding: 0 6px; background: #232323; }
table { width: 100%; border-collapse: collapse; }
table th, table td { height: 15px; padding: 0; font-weight: 400; text-align: left; }
tbody td { color: #3d8ee6; font: 7px/12px "Open Sans", sans-serif; }
table tr > :first-child { width: 46px; }
table tr > :nth-child(2), table tr > :nth-child(3) { width: 47px; }

.status { display: flex; align-items: center; gap: 11px; height: 14px; margin-top: 2px; padding: 0 38px 0 5px; background: #232323; font-family: Roboto, sans-serif; }
.message { flex: 1; font-family: Lato, sans-serif; }
.len { margin-left: 10px; }

.taskbar { width: 47px; flex: none; display: flex; flex-direction: column; align-items: center; color: #eee; font: 8px/12px Roboto, "Open Sans", sans-serif;
  background:
    radial-gradient(ellipse 12px 34px at 36px 405px, #1580a0, transparent),
    radial-gradient(ellipse 12px 34px at 36px 505px, #147a98, transparent),
    radial-gradient(ellipse 34px 90px at 4px 180px, #089ce0, transparent),
    linear-gradient(#030407 0 110px, #064d8c 140px, #0765aa 230px, #0a4d92 300px, #0a62b8 350px, #082540 425px, #0a3d70 455px, #04101f 480px, #093056 510px, #04101c 570px, #061524 680px, #0b2340); }
.taskbar button { justify-content: center; flex: none; }
.sys { width: 100%; height: 28px; }
.app svg { width: 16px; height: 16px; }
.sys svg { width: 15px; height: 15px; }
.app { width: 100%; height: 32px; background: linear-gradient(#e9e6f0, #e9e6f0) right center / 2px 26px no-repeat; }
.app.active { background: linear-gradient(#e9e6f0, #e9e6f0) right center / 2px 32px no-repeat, rgba(140, 165, 190, .5); }
.app text { font: 700 8px "Open Sans", sans-serif; }
.tray { display: grid; grid-template-columns: 17px 17px; grid-auto-rows: 17px; place-items: center; margin-top: auto; padding-right: 7px; }
.tray svg { width: 11px; height: 11px; }
.back { transform: rotate(180deg); }
.lang { margin: 5px 0 14px; }
.taskbar time { text-align: center; }
.note { height: 38px; }
.note svg { width: 14px; height: 14px; }
</style>
